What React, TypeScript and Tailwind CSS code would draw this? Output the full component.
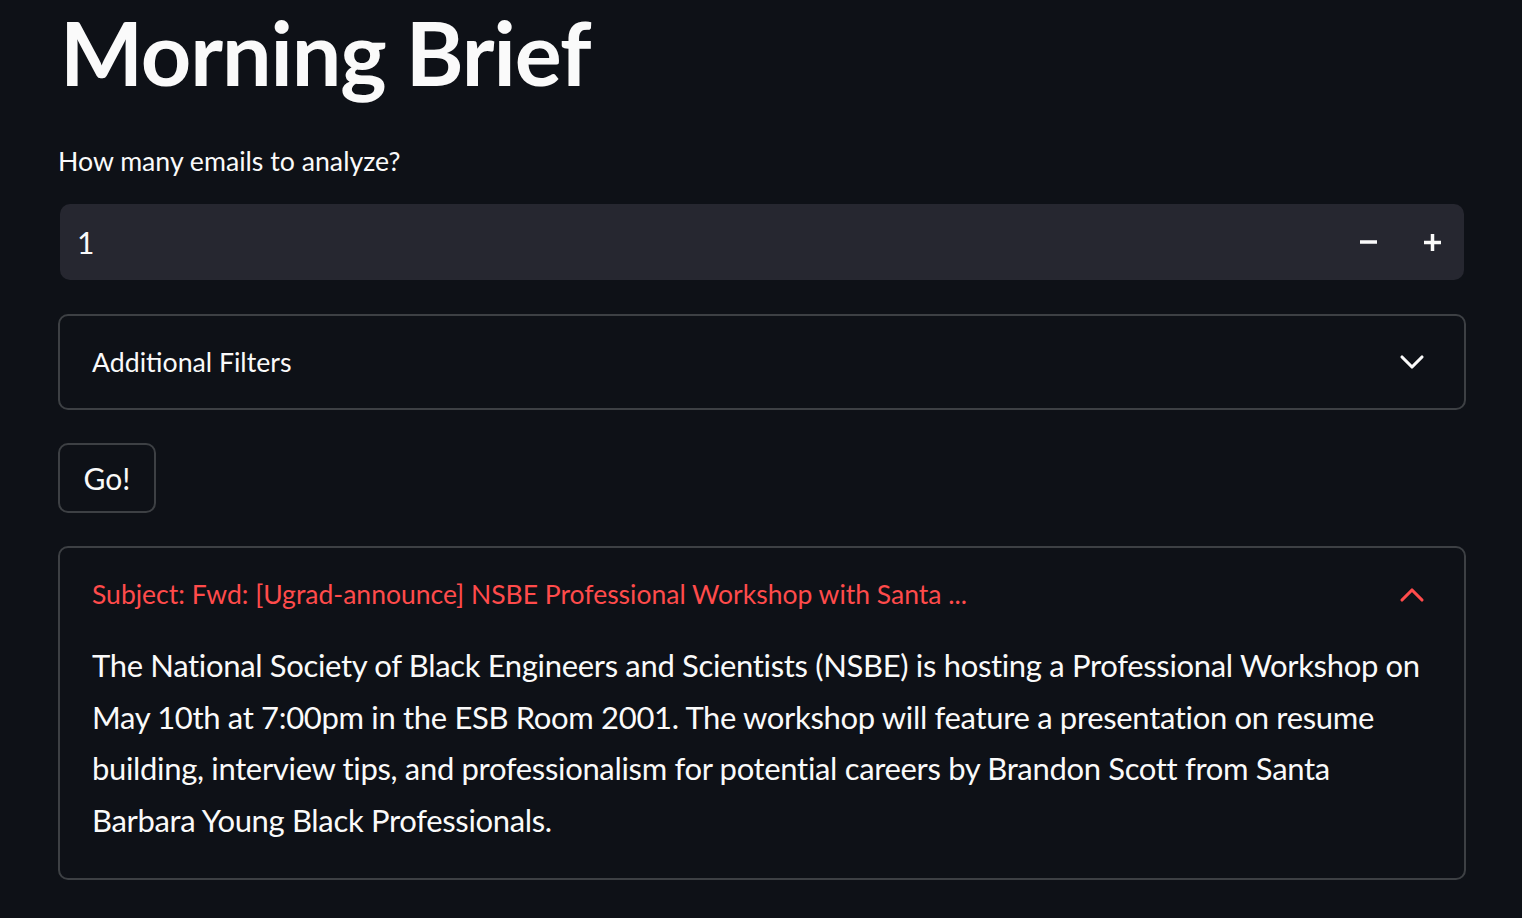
import React, { useState } from 'react';
import { ChevronDown, ChevronUp } from 'lucide-react';

const bodyLines = [
  'The National Society of Black Engineers and Scientists (NSBE) is hosting a Professional Workshop on',
  'May 10th at 7:00pm in the ESB Room 2001. The workshop will feature a presentation on resume',
  'building, interview tips, and professionalism for potential careers by Brandon Scott from Santa',
  'Barbara Young Black Professionals.',
];

export default function App() {
  const [count, setCount] = useState(1);
  const [filtersOpen, setFiltersOpen] = useState(false);
  const [emailOpen, setEmailOpen] = useState(true);

  return (
    <div className="min-h-[918px] w-full bg-[#0e1117] text-[#fafafa] font-['Lato','Noto_Sans',sans-serif] overflow-hidden">
      <div className="pl-[58px] pr-[56px] flex flex-col">
        {/* Title */}
        <h1 className="pl-[2px] text-[88px] font-bold leading-[108px] tracking-[-1.1px] -mt-[2px]">Morning Brief</h1>

        {/* Number input */}
        <label className="mt-[39px] text-[26.7px] leading-[32px]">How many emails to analyze?</label>
        <div className="mt-[27px] mx-[2px] h-[76px] rounded-[10px] bg-[#262730] flex items-center pl-[17px] pr-[12px]">
          <span className="flex-1 text-[30px]">{count}</span>
          <button onClick={() => setCount(Math.max(1, count - 1))} className="w-[40px] h-[40px] flex items-center justify-center mr-[24px]">
            <svg width="17" height="4" viewBox="0 0 17 4"><rect x="0" y="0.25" width="17" height="3.5" fill="#fafafa" /></svg>
          </button>
          <button onClick={() => setCount(count + 1)} className="w-[40px] h-[40px] flex items-center justify-center">
            <svg width="17" height="17" viewBox="0 0 17 17"><rect x="0" y="6.75" width="17" height="3.5" fill="#fafafa" /><rect x="6.75" y="0" width="3.5" height="17" fill="#fafafa" /></svg>
          </button>
        </div>

        {/* Additional filters expander */}
        <div className="mt-[34px] rounded-[10px] border-2 border-[#3d4044]">
          <button onClick={() => setFiltersOpen(!filtersOpen)} className="w-full h-[92px] flex items-center justify-between pl-[32px] pr-[32px]">
            <span className="text-[26.7px]">Additional Filters</span>
            <ChevronDown size={40} strokeWidth={1.9} className="text-[#fafafa]" />
          </button>
        </div>

        {/* Go button */}
        <div className="mt-[33px]">
          <button className="w-[98px] h-[70px] rounded-[10px] border-2 border-[#3d4044] text-[30px] flex items-center justify-center">Go!</button>
        </div>

        {/* Email expander */}
        <div className="mt-[33px] rounded-[10px] border-2 border-[#3d4044] pb-[32px]">
          <button onClick={() => setEmailOpen(!emailOpen)} className="w-full h-[94px] flex items-center justify-between pl-[32px] pr-[32px] text-[#ff4b4b]">
            <span className="text-[26.5px]">Subject: Fwd: [Ugrad-announce] NSBE Professional Workshop with Santa ...</span>
            {emailOpen ? <ChevronUp size={40} strokeWidth={1.9} /> : <ChevronDown size={40} strokeWidth={1.9} />}
          </button>
          {emailOpen && (
            <div className="px-[32px] text-[31px] leading-[51.5px] tracking-[-0.33px] -mt-[2px]">
              {bodyLines.map((line) => (
                <div key={line} className="whitespace-nowrap">{line}</div>
              ))}
            </div>
          )}
        </div>
      </div>
    </div>
  );
}
